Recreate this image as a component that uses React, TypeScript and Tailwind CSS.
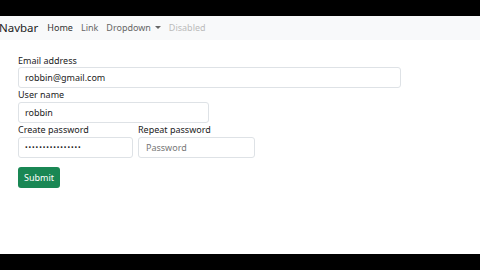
export default function App() {
  return (
    <div className="w-[480px] h-[270px] bg-black flex flex-col overflow-hidden" style={{ fontFamily: '"Noto Sans", "Open Sans", sans-serif' }}>
      <div className="h-[16px] bg-black" />
      <div className="flex-1 bg-white flex flex-col">
        <nav className="h-[24px] bg-[#f8f9fa] flex items-center pl-0 -ml-[1px]">
          <span className="text-[11.5px] text-[#222] mr-[9px]">Navbar</span>
          <div className="flex items-center gap-[8px] text-[9px]">
            <span className="text-[#333]">Home</span>
            <span className="text-[#666]">Link</span>
            <span className="text-[#666] flex items-center">
              Dropdown
              <svg width="6" height="4" viewBox="0 0 6 4" className="ml-[4px]"><path d="M0 0 L6 0 L3 3 Z" fill="#666" /></svg>
            </span>
            <span className="text-[#bbb]">Disabled</span>
          </div>
        </nav>
        <div className="pl-[18px] pt-[15px] flex flex-col text-[9px] text-[#222]">
          <label className="leading-[12px] h-[12px]">Email address</label>
          <div className="w-[383px] h-[21px] border border-[#dee2e6] rounded-[3px] flex items-center pl-[6px] text-[#222]">robbin@gmail.com</div>
          <label className="leading-[12px] h-[13px] mt-[1px]">User name</label>
          <div className="w-[191px] h-[21px] border border-[#dee2e6] rounded-[3px] flex items-center pl-[6px]">robbin</div>
          <div className="flex gap-[5px]">
            <div className="flex flex-col">
              <label className="leading-[12px] h-[14px] pt-[1px]">Create password</label>
              <div className="w-[115px] h-[21px] border border-[#dee2e6] rounded-[3px] flex items-center pl-[6px] text-[7px] tracking-[0.9px] leading-none">••••••••••••••••</div>
            </div>
            <div className="flex flex-col">
              <label className="leading-[12px] h-[14px] pt-[1px]">Repeat password</label>
              <div className="w-[117px] h-[21px] border border-[#dee2e6] rounded-[3px] flex items-center pl-[7px] text-[#777]">Password</div>
            </div>
          </div>
          <button className="mt-[9px] w-[42px] h-[21px] bg-[#198754] rounded-[3px] text-white text-[9px] flex items-center justify-center">Submit</button>
        </div>
      </div>
      <div className="h-[16px] bg-black" />
    </div>
  );
}
